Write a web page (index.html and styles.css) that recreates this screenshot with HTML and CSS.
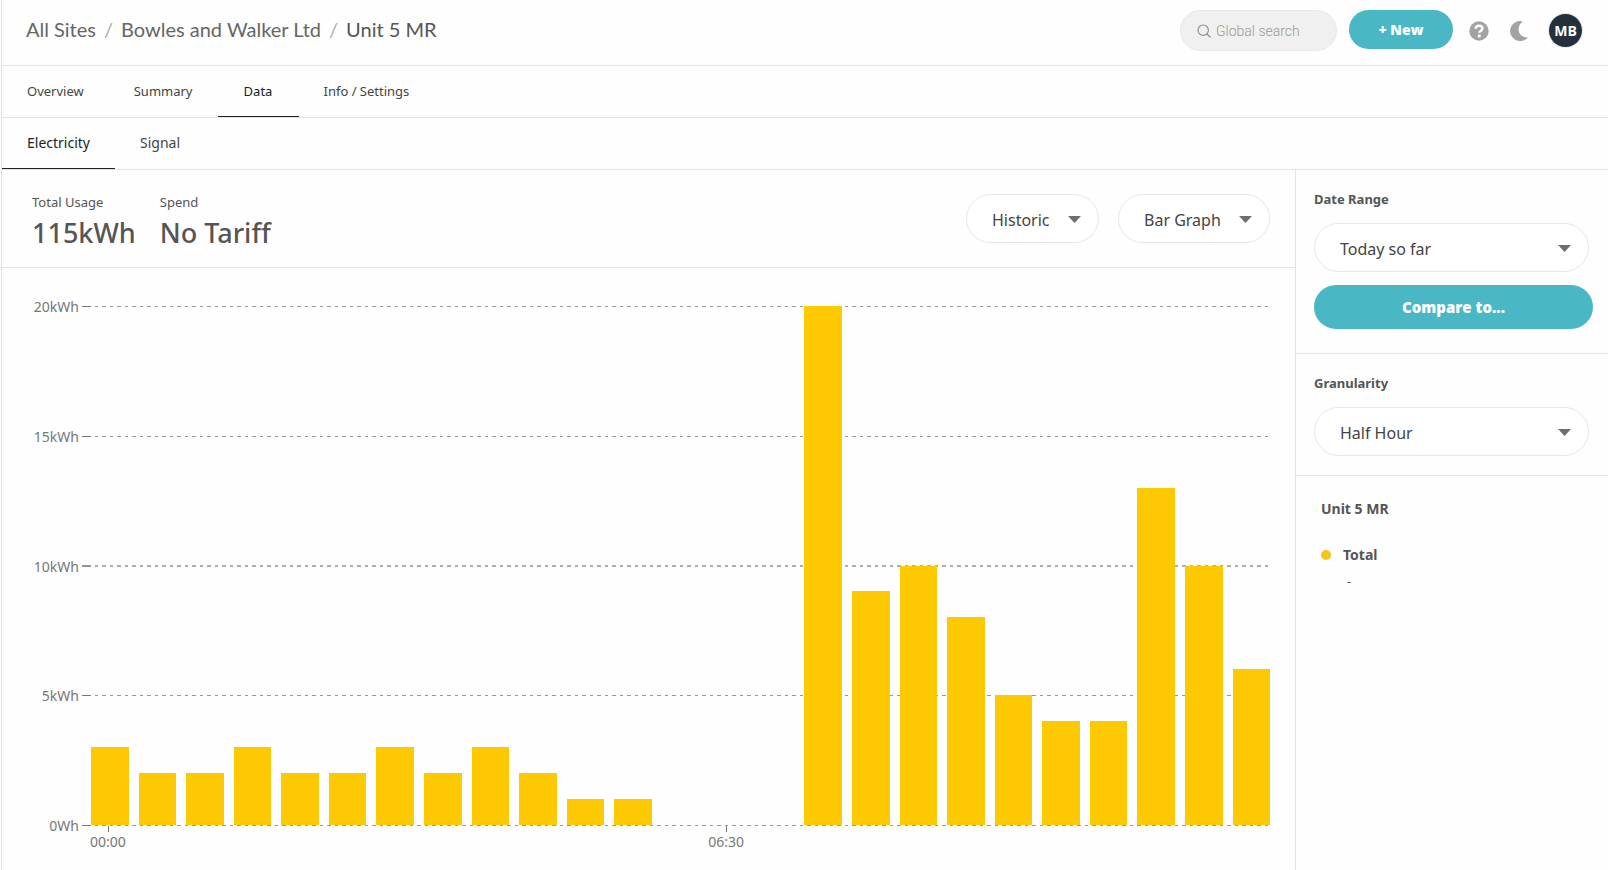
FILE: index.html
```html
<!DOCTYPE html>
<html lang="en">
<head>
<meta charset="utf-8">
<title>Unit 5 MR</title>
<link rel="stylesheet" href="styles.css">
</head>
<body>
<div class="app">
  <header class="topbar">
    <nav class="crumbs" aria-label="Breadcrumb">
      <a href="#">All Sites</a><span class="sep">/</span><a href="#">Bowles and Walker Ltd</a><span class="sep">/</span><a href="#" class="current">Unit 5 MR</a>
    </nav>
    <div class="actions">
      <label class="search">
        <svg width="14" height="14" viewBox="0 0 14 14" fill="none" stroke="#8f8f8f" stroke-width="1.2" stroke-linecap="round"><circle cx="6.2" cy="6.2" r="5.2"/><path d="M10 10l3 3"/></svg>
        <input type="search" placeholder="Global search" aria-label="Global search">
      </label>
      <button class="btn btn-new" type="button">+ New</button>
      <button class="icon-btn" type="button" aria-label="Help">
        <svg width="20" height="20" viewBox="0 0 20 20"><circle cx="10" cy="10" r="9.7" fill="#a3a3a3"/><path d="M6.7 7.8C6.8 5.8 8.2 4.8 10.1 4.8s3.300 1 3.300 2.700c0 2.300-3 2.200-3 4.300" fill="none" stroke="#fff" stroke-width="2.5"/><circle cx="10.3" cy="14.9" r="1.6" fill="#fff"/></svg>
      </button>
      <button class="icon-btn" type="button" aria-label="Dark mode">
        <svg width="20" height="20" viewBox="0 0 20 20"><path d="M13.8 0.4A10 10 0 1 0 18.800 16.400C13.600 16.600 9.600 13.600 9.600 8.600C9.600 5 11.200 2 13.800 0.400Z" fill="#a3a3a3"/></svg>
      </button>
      <button class="avatar" type="button">MB</button>
    </div>
  </header>
  <nav class="tabs" aria-label="Site">
    <a href="#">Overview</a><a href="#">Summary</a><a href="#" class="active">Data</a><a href="#">Info / Settings</a>
  </nav>
  <nav class="tabs subtabs" aria-label="Data">
    <a href="#" class="active">Electricity</a><a href="#">Signal</a>
  </nav>
  <div class="content">
    <main class="main">
      <section class="summary">
        <dl class="stats">
          <div><dt>Total Usage</dt><dd>115kWh</dd></div>
          <div><dt>Spend</dt><dd>No Tariff</dd></div>
        </dl>
        <div class="pickers">
          <div class="picker">
            <select aria-label="Period"><option>Historic</option></select>
            <svg class="caret" width="13" height="7" viewBox="0 0 13 7"><path d="M0 0h13L6.500 7z"/></svg>
          </div>
          <div class="picker">
            <select aria-label="Chart type"><option>Bar Graph</option></select>
            <svg class="caret" width="13" height="7" viewBox="0 0 13 7"><path d="M0 0h13L6.500 7z"/></svg>
          </div>
        </div>
      </section>
      <section class="chart" aria-label="Electricity usage">
        <div class="plot">
          <div class="bars">
            <i style="height:15%"></i><i style="height:10%"></i><i style="height:10%"></i><i style="height:15%"></i><i style="height:10%"></i>
            <i style="height:10%"></i><i style="height:15%"></i><i style="height:10%"></i><i style="height:15%"></i><i style="height:10%"></i>
            <i style="height:5%"></i><i style="height:5%"></i><i style="height:0%"></i><i style="height:0%"></i><i style="height:0%"></i>
            <i style="height:100%"></i><i style="height:45%"></i><i style="height:50%"></i><i style="height:40%"></i><i style="height:25%"></i>
            <i style="height:20%"></i><i style="height:20%"></i><i style="height:65%"></i><i style="height:50%"></i><i style="height:30%"></i>
          </div>
          <div class="scale">
            <div class="line"><span>20kWh</span></div>
            <div class="line"><span>15kWh</span></div>
            <div class="line mid"><span>10kWh</span></div>
            <div class="line"><span>5kWh</span></div>
            <div class="line"><span>0Wh</span></div>
          </div>
        </div>
        <div class="times">
          <span class="t-first">00:00</span><span class="t-second">06:30</span>
        </div>
      </section>
    </main>
    <aside class="side">
      <section class="panel">
        <label for="range">Date Range</label>
        <div class="picker">
          <select id="range"><option>Today so far</option></select>
          <svg class="caret" width="13" height="7" viewBox="0 0 13 7"><path d="M0 0h13L6.500 7z"/></svg>
        </div>
        <button class="btn btn-compare" type="button">Compare to...</button>
      </section>
      <section class="panel panel-small">
        <label for="grain">Granularity</label>
        <div class="picker">
          <select id="grain"><option>Half Hour</option></select>
          <svg class="caret" width="13" height="7" viewBox="0 0 13 7"><path d="M0 0h13L6.500 7z"/></svg>
        </div>
      </section>
      <section class="legend">
        <h2>Unit 5 MR</h2>
        <p class="entry"><span class="dot"></span>Total</p>
        <p class="value">-</p>
      </section>
    </aside>
  </div>
</div>
</body>
</html>
```
FILE: styles.css
```css
* { box-sizing: border-box; }
body {
  margin: 0;
  padding-left: 1px;
  background: #fefefe;
  color: #555;
  font-family: "Noto Sans", "Open Sans", sans-serif;
  font-size: 13px;
}
a { color: inherit; text-decoration: none; }
button, input, select { font: inherit; color: inherit; }
button { border: 0; padding: 0; background: none; cursor: pointer; }
dl, dd, p, h2 { margin: 0; }
svg { display: block; }

.app {
  display: flex;
  flex-direction: column;
  min-height: 100vh;
  border-left: 1px solid #e2e2e2;
}

.topbar {
  display: flex;
  justify-content: space-between;
  align-items: flex-start;
  padding: 10px 26px 14px 24px;
  border-bottom: 1px solid #e4e4e4;
}
.crumbs { font-family: Lato, sans-serif; font-size: 20px; line-height: 38px; color: #666; }
.crumbs .sep { margin: 0 8px; color: #aaa; }
.crumbs .current { color: #555; }

.actions { display: flex; align-items: center; }
.search {
  display: flex;
  align-items: center;
  gap: 5px;
  width: 157px;
  height: 41px;
  padding: 0 16px;
  border: 1px solid #e8e8e8;
  border-radius: 21px;
  background: #f0f0f0;
}
.search svg { flex: none; }
.search input {
  width: 100%;
  min-width: 0;
  padding: 0;
  border: 0;
  outline: 0;
  background: none;
  font: 300 14px Roboto, sans-serif;
}
.search input::placeholder { color: #999; opacity: 1; }

.btn { background: #4ab8c4; color: #fff; font-weight: 800; font-family: "Open Sans", sans-serif; }
.btn-new { align-self: flex-start; width: 104px; height: 39px; margin: 0 16px 0 12px; border-radius: 20px; font-size: 14px; }
.icon-btn { margin-right: 20px; }
.avatar {
  width: 33px;
  height: 33px;
  border-radius: 50%;
  background: #24303c;
  box-shadow: 0 0 0 1px #e3e9f0;
  color: #fff;
  font-family: "Open Sans", sans-serif;
  font-size: 14px;
  font-weight: 700;
}

.tabs { display: flex; border-bottom: 1px solid #e4e4e4; color: #444; font-size: 13px; }
.tabs a { min-width: 81px; padding: 0 25px; line-height: 50px; text-align: center; border-bottom: 1px solid transparent; }
.tabs .active { color: #222; border-bottom-color: #222; }
.subtabs { font-size: 14px; }

.content { flex: 1; display: flex; }
.main { flex: 1; min-width: 0; display: flex; flex-direction: column; }

.summary {
  display: flex;
  justify-content: space-between;
  align-items: flex-start;
  padding: 24px 25px 18px 30px;
  border-bottom: 1px solid #e4e4e4;
}
.stats { display: flex; gap: 24px; }
.stats dt { font-size: 13px; line-height: 16px; }
.stats dd { font-size: 27px; line-height: 32px; padding-top: 7px; font-weight: 500; }
.pickers { display: flex; gap: 19px; }

.picker { display: grid; align-items: center; }
.picker > * { grid-area: 1 / 1; }
.picker select {
  appearance: none;
  width: 100%;
  height: 49px;
  padding: 2px 48px 0 25px;
  border: 1px solid #e6e6e6;
  border-radius: 25px;
  background: #fff;
  color: #444;
  font-size: 16px;
}
.caret { justify-self: end; margin: 2px 18px 0 0; fill: #6e6e6e; pointer-events: none; }

.chart { flex: 1; display: flex; flex-direction: column; padding: 38px 25px 18px 31px; color: #777; font-size: 14px; }
.plot { flex: 1; display: grid; }
.plot > * { grid-area: 1 / 1; }
.bars { z-index: 1; display: flex; align-items: flex-end; gap: 10px; padding: 0 0 1px 58px; }
.bars i { flex: 1; background: #fdc903; }
.scale { display: flex; flex-direction: column; justify-content: space-between; margin-right: 1px; }
.line { display: flex; align-items: center; height: 1px; }
.line span { width: 46px; text-align: right; }
.line::before, .line::after { content: ""; height: 1px; }
.line::before { order: 1; width: 9px; margin-left: 3px; background: #777; }
.line::after {
  order: 2;
  flex: 1;
  background: repeating-linear-gradient(90deg, transparent 0 4px, #999 4px 7px, transparent 7px 11px, #999 11px 15px);
}
.mid::before, .mid::after { height: 2px; opacity: 0.8; }
.times {
  display: grid;
  grid-template-columns: repeat(25, 1fr);
  column-gap: 10px;
  padding: 0 2px 0 56px;
}
.times span { display: flex; flex-direction: column; align-items: center; line-height: 20px; width: 38px; }
.times span::before { content: ""; width: 1px; height: 6px; background: #777; }
.t-first { grid-column: 1; }
.t-second { grid-column: 14; }

.side { width: 313px; border-left: 1px solid #e4e4e4; }
.panel { padding: 19px 19px 24px 18px; border-bottom: 1px solid #e4e4e4; font-weight: 700; }
.panel label { display: block; line-height: 20px; margin-bottom: 14px; }
.panel .picker select { font-weight: 400; }
.btn-compare { width: calc(100% + 4px); height: 44px; margin-top: 13px; border-radius: 22px; font-size: 15px; }
.panel-small { padding-bottom: 19px; }
.legend { padding: 23px 25px; }
.legend h2, .entry { font-size: 14px; line-height: 20px; font-weight: 700; }
.entry { display: flex; align-items: center; gap: 12px; margin-top: 26px; }
.dot { width: 10px; height: 10px; border-radius: 50%; background: #f5c518; }
.value { padding-left: 26px; line-height: 32px; }
```
